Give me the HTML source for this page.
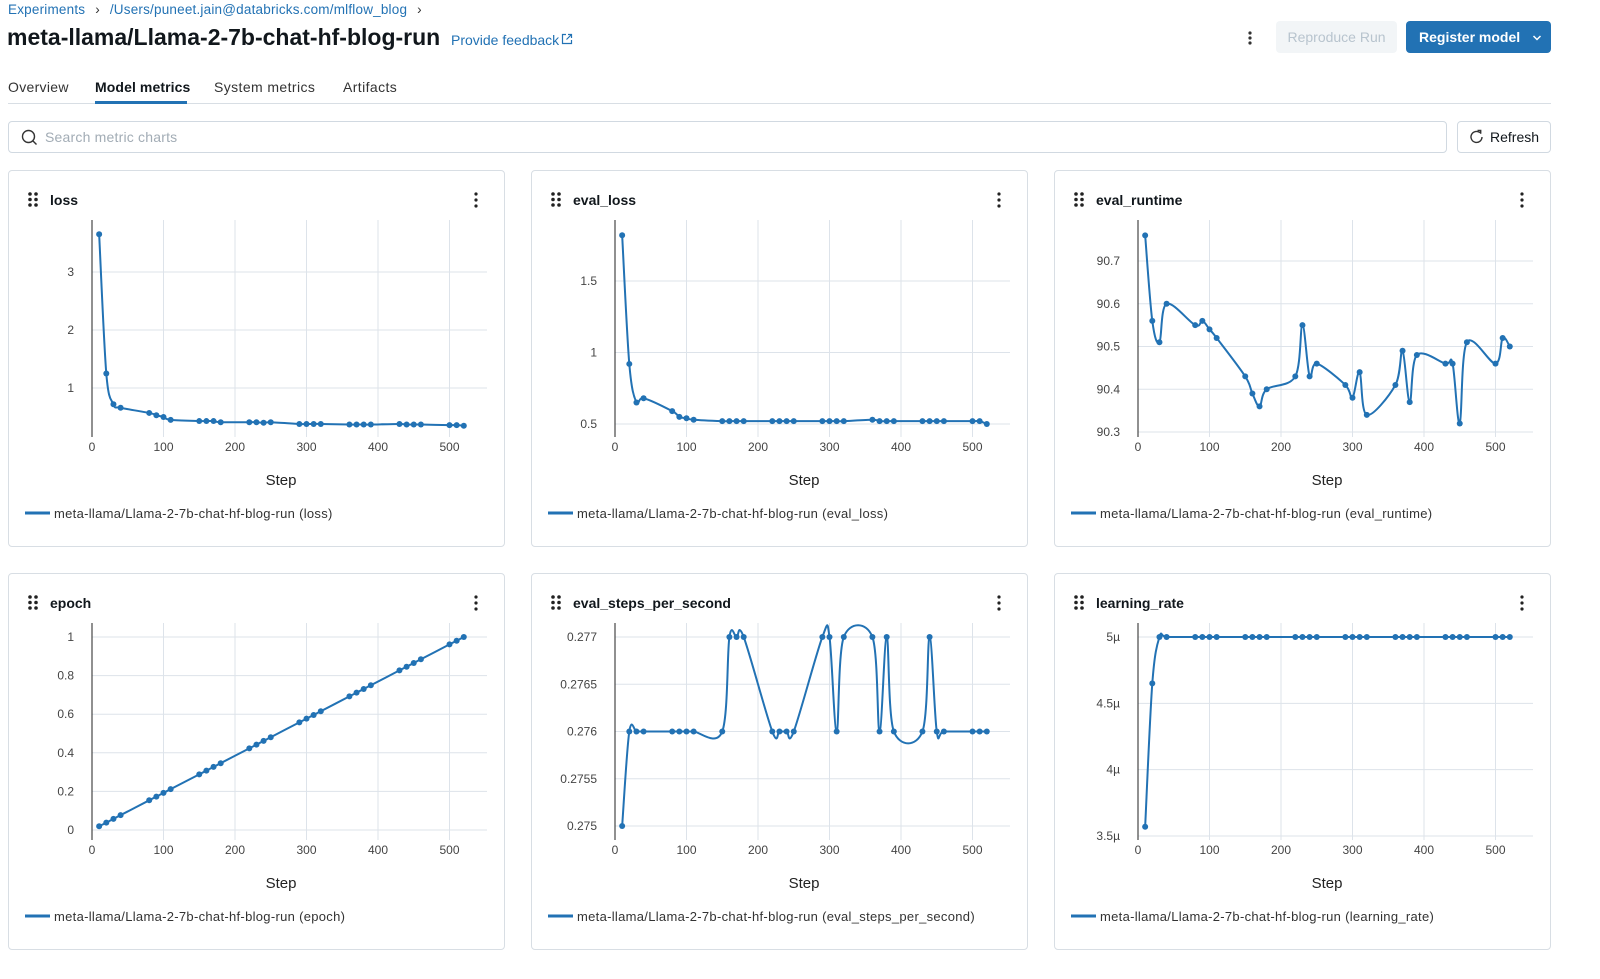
<!DOCTYPE html>
<html><head><meta charset="utf-8">
<style>
*{box-sizing:border-box;margin:0;padding:0}
body{width:1600px;height:979px;background:#fff;font-family:"Liberation Sans",sans-serif;color:#11171c;position:relative;overflow:hidden}
.a{position:absolute;white-space:nowrap}
.card{position:absolute;width:497px;height:377px;border:1px solid #d8dee4;border-radius:4px}
</style></head><body>
<div class="a" style="left:8px;top:2px;font-size:13.5px;letter-spacing:0.2px;color:#2272b4">Experiments <span style="color:#333;margin:0 6px">›</span> /Users/puneet.jain@databricks.com/mlflow_blog <span style="color:#333;margin-left:6px">›</span></div>
<div class="a" style="left:7px;top:24px;font-size:23px;font-weight:600;letter-spacing:0px">meta-llama/Llama-2-7b-chat-hf-blog-run</div>
<div class="a" style="left:451px;top:32px;font-size:14px;color:#2272b4">Provide feedback<svg width="12" height="12" viewBox="0 0 12 12" style="margin-left:2px"><path d="M5 1.5H1.5v9h9V7M7 1.5h3.5V5M10.5 1.5 5.5 6.5" stroke="#2272b4" fill="none" stroke-width="1.2"/></svg></div>
<svg class="a" style="left:1246px;top:30px" width="8" height="16"><circle cx="4" cy="3" r="1.6" fill="#333"/><circle cx="4" cy="8" r="1.6" fill="#333"/><circle cx="4" cy="13" r="1.6" fill="#333"/></svg>
<div class="a" style="left:1276px;top:21px;width:121px;height:32px;background:#f2f5f7;border-radius:4px;color:#b8c4ce;font-size:14px;text-align:center;line-height:32px">Reproduce Run</div>
<div class="a" style="left:1406px;top:21px;width:145px;height:32px;background:#2272b4;border-radius:4px;color:#fff;font-size:14px;font-weight:600;line-height:32px;padding-left:13px">Register model<svg width="10" height="8" style="margin-left:12px"><path d="M1.5 2 5 5.5 8.5 2" stroke="#fff" stroke-width="1.5" fill="none"/></svg></div>
<div class="a" style="left:8px;top:79px;font-size:14px;letter-spacing:0.3px;color:#333">Overview</div>
<div class="a" style="left:95px;top:79px;font-size:14px;font-weight:600;letter-spacing:0.1px">Model metrics</div>
<div class="a" style="left:214px;top:79px;font-size:14px;letter-spacing:0.4px;color:#333">System metrics</div>
<div class="a" style="left:343px;top:79px;font-size:14px;letter-spacing:0.4px;color:#333">Artifacts</div>
<div class="a" style="left:8px;top:103px;width:1543px;height:1px;background:#d8dee4"></div>
<div class="a" style="left:95px;top:101px;width:92px;height:3px;background:#2272b4"></div>
<div class="a" style="left:8px;top:121px;width:1439px;height:32px;border:1px solid #d1d9e1;border-radius:4px"></div>
<svg class="a" style="left:21px;top:129px" width="17" height="17"><circle cx="7.5" cy="7.5" r="6" stroke="#333" stroke-width="1.4" fill="none"/><path d="M12 12 15.5 15.5" stroke="#333" stroke-width="1.4"/></svg>
<div class="a" style="left:45px;top:129px;font-size:14px;color:#a2acb5;letter-spacing:0.2px">Search metric charts</div>
<div class="a" style="left:1457px;top:121px;width:94px;height:32px;border:1px solid #d1d9e1;border-radius:4px;font-size:14px;line-height:30px;padding-left:32px;color:#11171c">Refresh</div>
<svg class="a" style="left:1469px;top:129px" width="16" height="16"><path d="M13 8A5.5 5.5 0 1 1 11 3.7" stroke="#333" stroke-width="1.4" fill="none"/><path d="M8.5 1.5h3.2v3.2" stroke="#333" stroke-width="1.4" fill="none"/></svg>
<div id="charts"></div>
<script>
const C='#2272b4';
const steps=[10,20,30,40,80,90,100,110,150,160,170,180,220,230,240,250,290,300,310,320,360,370,380,390,430,440,450,460,500,510,520];
function mk(vals){return steps.map((s,i)=>[s,vals[i]]);}
const charts=[
{t:'loss',x:8,y:170,ya:[3,272,1,388],ticks:[[1,'1'],[2,'2'],[3,'3']],d:mk([3.65,1.25,0.72,0.66,0.57,0.53,0.5,0.45,0.43,0.43,0.43,0.41,0.41,0.41,0.4,0.41,0.38,0.38,0.38,0.38,0.37,0.37,0.37,0.37,0.38,0.37,0.37,0.37,0.36,0.36,0.35])},
{t:'eval_loss',x:531,y:170,ya:[1.5,281,0.5,424],ticks:[[0.5,'0.5'],[1,'1'],[1.5,'1.5']],d:mk([1.82,0.92,0.65,0.68,0.59,0.55,0.54,0.53,0.52,0.52,0.52,0.52,0.52,0.52,0.52,0.52,0.52,0.52,0.52,0.52,0.53,0.52,0.52,0.52,0.52,0.52,0.52,0.52,0.52,0.52,0.5])},
{t:'eval_runtime',x:1054,y:170,ya:[90.7,261,90.3,432],ticks:[[90.3,'90.3'],[90.4,'90.4'],[90.5,'90.5'],[90.6,'90.6'],[90.7,'90.7']],d:mk([90.76,90.56,90.51,90.6,90.55,90.56,90.54,90.52,90.43,90.39,90.36,90.40,90.43,90.55,90.43,90.46,90.41,90.38,90.44,90.34,90.41,90.49,90.37,90.48,90.46,90.46,90.32,90.51,90.46,90.52,90.50])},
{t:'epoch',x:8,y:573,ya:[0,830,1,637],ticks:[[0,'0'],[0.2,'0.2'],[0.4,'0.4'],[0.6,'0.6'],[0.8,'0.8'],[1,'1']],d:steps.map(s=>[s,s/520])},
{t:'eval_steps_per_second',x:531,y:573,ya:[0.277,637,0.275,826],ticks:[[0.275,'0.275'],[0.2755,'0.2755'],[0.276,'0.276'],[0.2765,'0.2765'],[0.277,'0.277']],d:mk([0.275,0.276,0.276,0.276,0.276,0.276,0.276,0.276,0.276,0.277,0.277,0.277,0.276,0.276,0.276,0.276,0.277,0.277,0.276,0.277,0.277,0.276,0.277,0.276,0.276,0.277,0.276,0.276,0.276,0.276,0.276])},
{t:'learning_rate',x:1054,y:573,ya:[5,637,3.5,836],ticks:[[3.5,'3.5µ'],[4,'4µ'],[4.5,'4.5µ'],[5,'5µ']],d:mk([3.57,4.65,5,5,5,5,5,5,5,5,5,5,5,5,5,5,5,5,5,5,5,5,5,5,5,5,5,5,5,5,5])}
];
function spline(P){let d=`M${P[0][0]},${P[0][1]}`;for(let i=0;i<P.length-1;i++){const p0=P[i-1]||P[i],p1=P[i],p2=P[i+1],p3=P[i+2]||p2;const t=1/6;d+=` C${p1[0]+(p2[0]-p0[0])*t},${p1[1]+(p2[1]-p0[1])*t} ${p2[0]-(p3[0]-p1[0])*t},${p2[1]-(p3[1]-p1[1])*t} ${p2[0]},${p2[1]}`;}return d;}
let h='';
for(const c of charts){
 const X=s=>84+s*0.715, Y=v=>c.ya[1]+(v-c.ya[0])*(c.ya[3]-c.ya[1])/(c.ya[2]-c.ya[0])-c.y;
 let s=`<svg width="497" height="377" style="position:absolute;left:-1px;top:-1px;font-family:'Liberation Sans',sans-serif">`;
 for(let k=1;k<=5;k++)s+=`<line x1="${X(k*100)}" x2="${X(k*100)}" y1="50" y2="267" stroke="#dde3ea"/>`;
 for(const [v,l] of c.ticks){const y=Y(v);s+=`<line x1="84" x2="479" y1="${y}" y2="${y}" stroke="#dde3ea"/><text x="66" y="${y+4}" font-size="12" fill="#444" text-anchor="end">${l}</text>`;}
 s+=`<line x1="84" x2="84" y1="50" y2="267" stroke="#222"/>`;
 for(let k=0;k<=5;k++)s+=`<text x="${X(k*100)}" y="281" font-size="12" fill="#444" text-anchor="middle">${k*100}</text>`;
 const P=c.d.map(p=>[X(p[0]),Y(p[1])]);
 s+=`<path fill="none" stroke="${C}" stroke-width="2" d="${spline(P)}"/>`;
 for(const p of P)s+=`<circle cx="${p[0]}" cy="${p[1]}" r="3" fill="${C}"/>`;
 s+=`<text x="273" y="315" font-size="15" fill="#222" text-anchor="middle">Step</text>`;
 s+=`<line x1="17" x2="42" y1="343" y2="343" stroke="${C}" stroke-width="3"/><text x="46" y="348" font-size="13" letter-spacing="0.3" fill="#333">meta-llama/Llama-2-7b-chat-hf-blog-run (${c.t})</text>`;
 s+=`<g fill="#222"><circle cx="22" cy="24" r="1.8"/><circle cx="28" cy="24" r="1.8"/><circle cx="22" cy="29.5" r="1.8"/><circle cx="28" cy="29.5" r="1.8"/><circle cx="22" cy="35" r="1.8"/><circle cx="28" cy="35" r="1.8"/><circle cx="468" cy="24" r="1.6"/><circle cx="468" cy="30" r="1.6"/><circle cx="468" cy="36" r="1.6"/></g>`;
 s+=`<text x="42" y="35" font-size="14" font-weight="600" fill="#11171c">${c.t}</text></svg>`;
 h+=`<div class="card" style="left:${c.x}px;top:${c.y}px">${s}</div>`;
}
document.getElementById('charts').innerHTML=h;
</script>
</body></html>
